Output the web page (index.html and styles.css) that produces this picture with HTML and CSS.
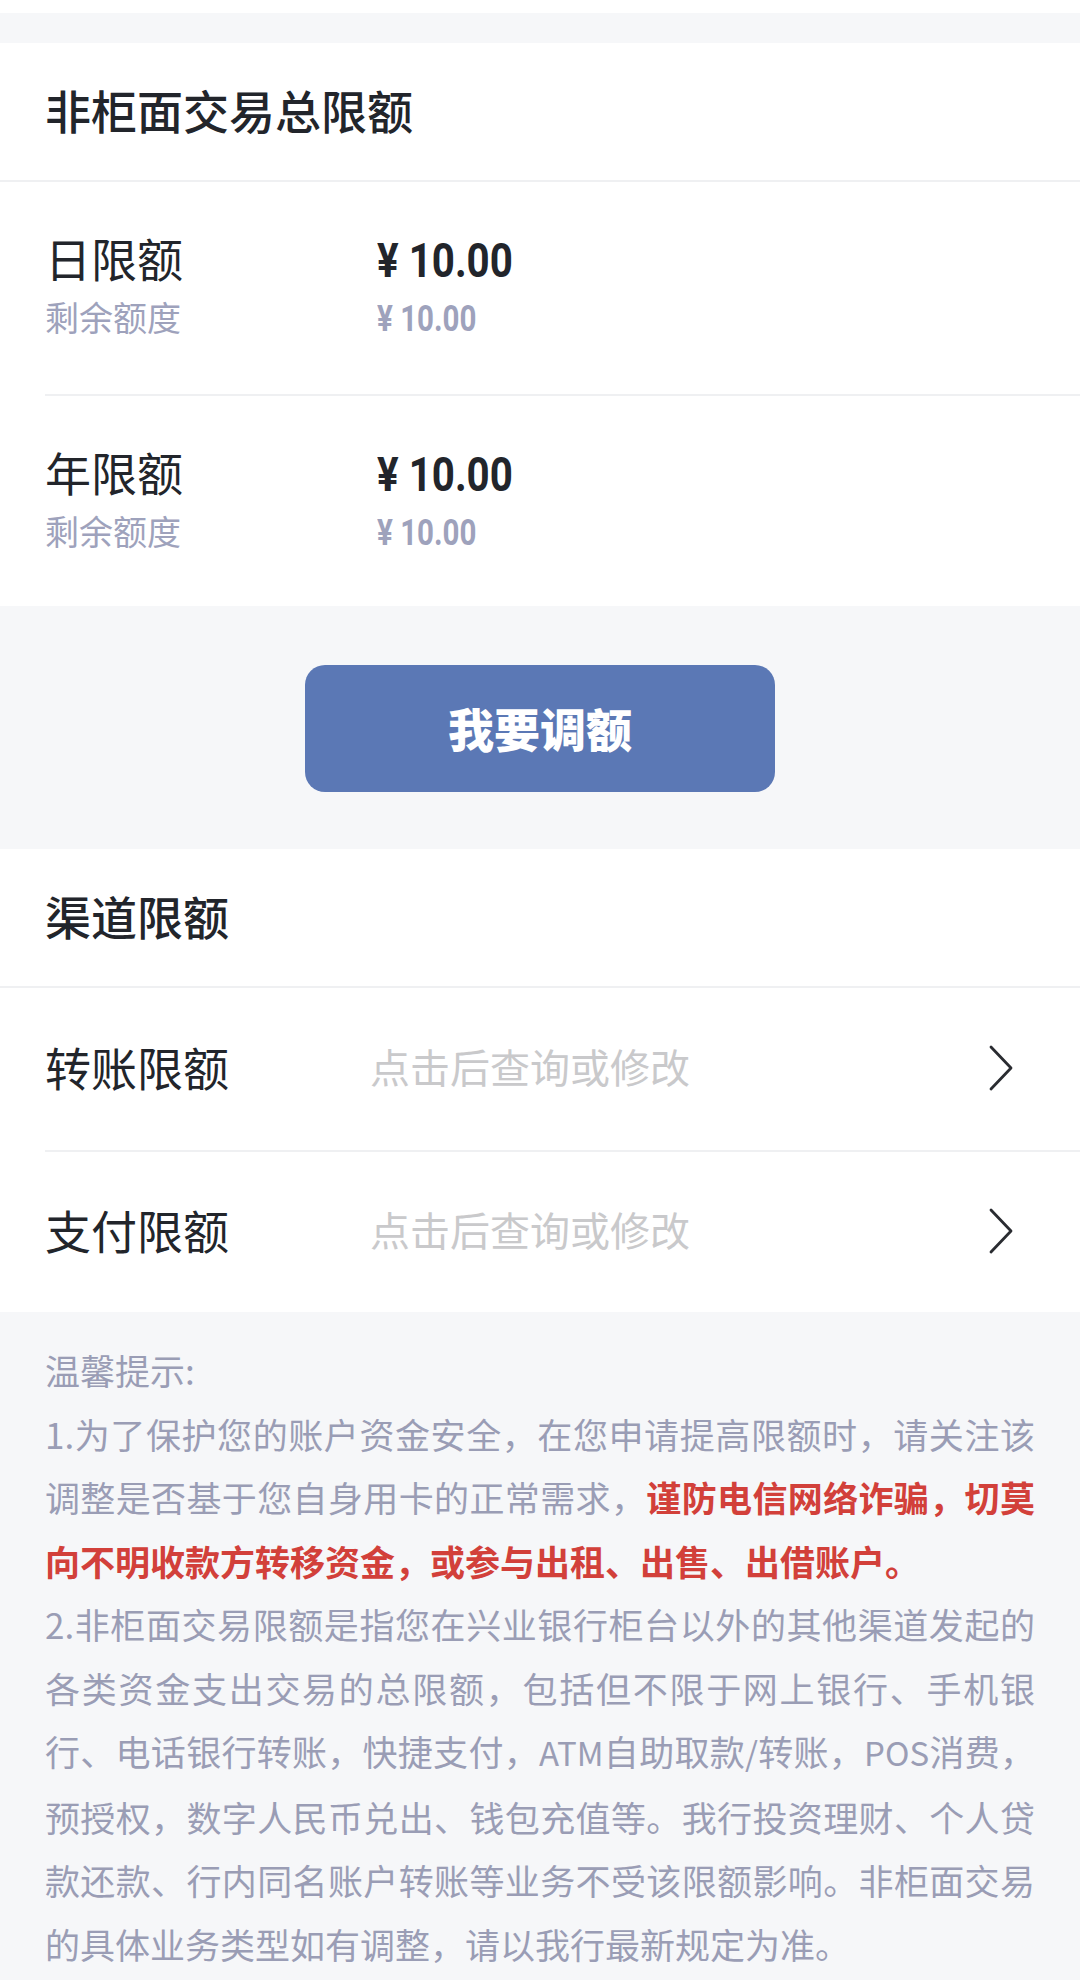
FILE: index.html
```html
<!DOCTYPE html>
<html lang="zh-CN">
<head>
<meta charset="utf-8">
<title>限额管理</title>
<link rel="stylesheet" href="styles.css">
</head>
<body>
<div class="top-white"></div>
<div class="top-gap"></div>

<section class="card">
  <div class="card-title">非柜面交易总限额</div>
  <div class="limit-row">
    <div class="limit-label">日限额</div>
    <div class="limit-amount">¥ 10.00</div>
    <div class="limit-sub">剩余额度</div>
    <div class="limit-remain">¥ 10.00</div>
  </div>
  <div class="limit-row">
    <div class="limit-label">年限额</div>
    <div class="limit-amount">¥ 10.00</div>
    <div class="limit-sub">剩余额度</div>
    <div class="limit-remain">¥ 10.00</div>
  </div>
</section>

<div class="btn-area">
  <button class="primary-btn">我要调额</button>
</div>

<section class="card">
  <div class="card-title">渠道限额</div>
  <div class="channel-row">
    <div class="channel-label">转账限额</div>
    <div class="channel-hint">点击后查询或修改</div>
    <svg class="chevron" width="26" height="46" viewBox="0 0 26 46"><polyline points="3,2 23,23 3,44" fill="none" stroke="#2a2c31" stroke-width="2.8" stroke-linecap="round" stroke-linejoin="round"/></svg>
  </div>
  <div class="channel-row">
    <div class="channel-label">支付限额</div>
    <div class="channel-hint">点击后查询或修改</div>
    <svg class="chevron" width="26" height="46" viewBox="0 0 26 46"><polyline points="3,2 23,23 3,44" fill="none" stroke="#2a2c31" stroke-width="2.8" stroke-linecap="round" stroke-linejoin="round"/></svg>
  </div>
</section>

<section class="notice">
  <p>温馨提示:</p>
  <p>1.为了保护您的账户资金安全，在您申请提高限额时，请关注该调整是否基于您自身用卡的正常需求，<strong class="warn">谨防电信网络诈骗，切莫向不明收款方转移资金，或参与出租、出售、出借账户。</strong></p>
  <p>2.非柜面交易限额是指您在兴业银行柜台以外的其他渠道发起的各类资金支出交易的总限额，包括但不限于网上银行、手机银行、电话银行转账，快捷支付，<span class="latin">ATM</span>自助取款<span class="latin">/</span>转账，<span class="latin">POS</span>消费，预授权，数字人民币兑出、钱包充值等。我行投资理财、个人贷款还款、行内同名账户转账等业务不受该限额影响。非柜面交易的具体业务类型如有调整，请以我行最新规定为准。</p>
</section>
</body>
</html>
```

FILE: styles.css
```css
* {
  box-sizing: border-box;
}

html, body {
  margin: 0;
  padding: 0;
}

body {
  width: 1080px;
  min-height: 1980px;
  background: #f6f7f9;
  font-family: "Noto Sans CJK SC", "Noto Sans", sans-serif;
  color: #22252b;
}

.top-white {
  height: 13px;
  background: #ffffff;
}

.top-gap {
  height: 30px;
}

.card {
  background: #ffffff;
}

.card-title {
  height: 139px;
  display: flex;
  align-items: center;
  padding-left: 45px;
  padding-bottom: 5px;
  font-size: 46px;
  line-height: 56px;
  font-weight: 500;
  color: #22252b;
  border-bottom: 2px solid #eff0f2;
}

.limit-row {
  display: grid;
  grid-template-columns: 332px 1fr;
  grid-template-rows: 56px 60px;
  margin-left: 45px;
  padding: 51px 0 44px;
  height: 212px;
}

.limit-row + .limit-row {
  border-top: 2px solid #eff0f2;
}

.limit-label {
  font-size: 46px;
  line-height: 56px;
  margin-top: -4px;
  color: #22252b;
}

.limit-amount {
  font-family: "Roboto", sans-serif;
  font-weight: 700;
  font-size: 48px;
  line-height: 56px;
  color: #22252b;
  transform: scaleX(0.84);
  transform-origin: left center;
}

.limit-sub {
  font-size: 34px;
  line-height: 60px;
  margin-top: -2px;
  color: #9ea2bc;
}

.limit-remain {
  font-family: "Roboto", sans-serif;
  font-weight: 700;
  font-size: 36px;
  line-height: 60px;
  color: #9ea2bc;
  transform: scaleX(0.82);
  transform-origin: left center;
}

.btn-area {
  display: flex;
  justify-content: center;
  padding: 59px 0 57px;
}

.primary-btn {
  width: 470px;
  height: 127px;
  border: none;
  border-radius: 20px;
  background: #5b78b5;
  color: #ffffff;
  font-family: "Noto Sans CJK SC", sans-serif;
  font-size: 46px;
  font-weight: 900;
  padding: 0 0 4px;
}

.channel-row {
  display: flex;
  align-items: center;
  margin-left: 45px;
  height: 162px;
  padding-bottom: 6px;
}

.channel-row + .channel-row {
  border-top: 2px solid #eff0f2;
}

.channel-label {
  width: 325px;
  font-size: 46px;
  line-height: 56px;
  color: #22252b;
}

.channel-hint {
  flex: 1;
  font-size: 40px;
  line-height: 56px;
  color: #c9c9cb;
}

.chevron {
  margin-right: 66px;
  margin-top: 4px;
  flex: none;
}

.notice {
  padding: 26px 45px 20px;
  font-size: 35px;
  line-height: 63.5px;
  color: #9a9db5;
  text-align: justify;
}

.notice p {
  margin: 0;
}

.latin {
  font-size: 33px;
}

.warn {
  color: #d2403a;
  font-weight: 700;
}
```
